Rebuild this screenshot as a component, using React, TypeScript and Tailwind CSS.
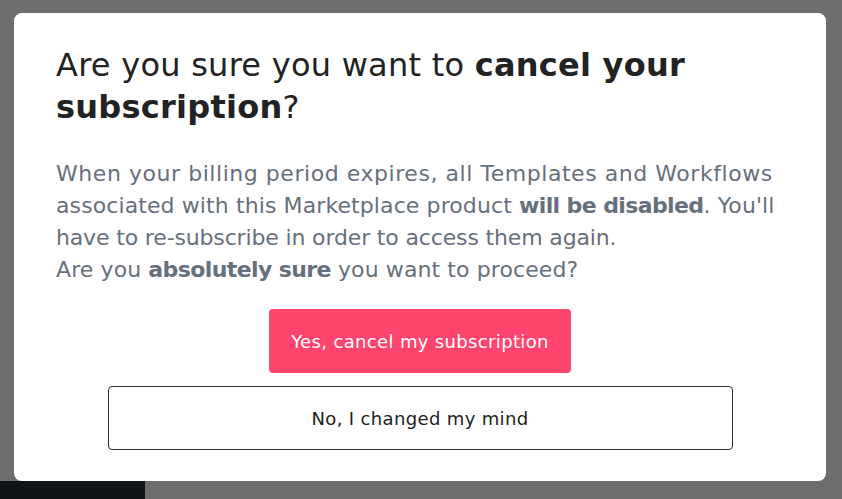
import React from "react";

export default function App() {
  return (
    <div
      className="w-[842px] h-[499px] bg-[#6c6d6f] flex flex-col overflow-hidden"
      style={{ fontFamily: '"DejaVu Sans", "Liberation Sans", sans-serif' }}
    >
      <div className="pt-[13px] pl-[14px]">
        <div className="w-[812px] h-[468px] bg-white rounded-[8px] pt-[31px] px-[42px] flex flex-col">
          <h1 className="text-[32px] leading-[42px] text-[#222222] font-normal tracking-[0.25px]">
            Are you sure you want to <span className="font-bold">cancel your</span>
            <br />
            <span className="font-bold">subscription</span>?
          </h1>
          <p className="mt-[30px] text-[22px] leading-[32px] text-[#66707c] tracking-[0.1px] whitespace-nowrap">
            <span className="tracking-[0.55px]">When your billing period expires, all Templates and Workflows</span>
            <br />
            associated with this Marketplace product{" "}
            <span className="font-bold tracking-[-0.6px]">will be disabled</span>. You'll
            <br />
            <span className="tracking-[-0.15px]">have to re-subscribe in order to access them again.</span>
            <br />
            Are you <span className="font-bold tracking-[-0.6px]">absolutely sure</span> you want to proceed?
          </p>
          <div className="mt-[23px] flex flex-col items-center gap-[13px]">
            <button className="h-[64px] w-[302px] rounded-[4px] bg-[#ff446e] text-white text-[18px] tracking-[0.35px]">
              Yes, cancel my subscription
            </button>
            <button className="h-[64px] w-[625px] rounded-[4px] border border-[#2c2f36] bg-white text-[#222222] text-[18px] tracking-[0.35px]">
              No, I changed my mind
            </button>
          </div>
        </div>
      </div>
      <div className="flex-1 flex">
        <div className="w-[145px] bg-[#111417]" />
      </div>
    </div>
  );
}
